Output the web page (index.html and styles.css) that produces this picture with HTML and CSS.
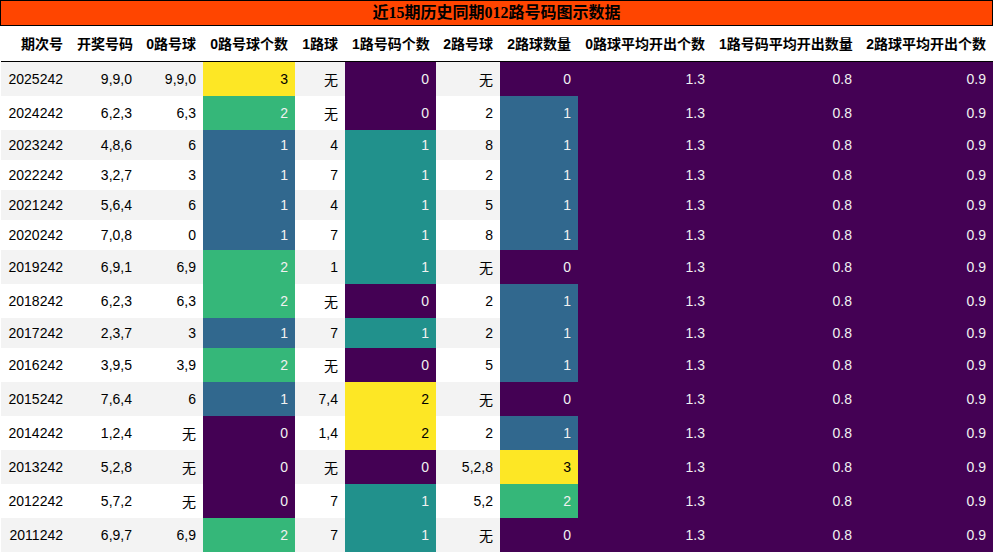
FILE: index.html
```html
<!DOCTYPE html>
<html lang="zh">
<head>
<meta charset="utf-8">
<title>近15期历史同期012路号码图示数据</title>
<link rel="stylesheet" href="styles.css">
</head>
<body>
<div class="wrap">
  <div class="title">近15期历史同期012路号码图示数据</div>
  <table class="data">
    <colgroup>
      <col class="w69"><col class="w69"><col class="w64"><col class="w92"><col class="w50"><col class="w91"><col class="w64"><col class="w78"><col class="w134"><col class="w147"><col class="w134">
    </colgroup>
    <thead>
      <tr><th>期次号</th><th>开奖号码</th><th>0路号球</th><th>0路号球个数</th><th>1路球</th><th>1路号码个数</th><th>2路号球</th><th>2路球数量</th><th>0路球平均开出个数</th><th>1路号码平均开出数量</th><th>2路球平均开出个数</th></tr>
    </thead>
    <tbody>
      <tr><td>2025242</td><td>9,9,0</td><td>9,9,0</td><td class="c3">3</td><td>无</td><td class="c0">0</td><td>无</td><td class="c0">0</td><td class="c0">1.3</td><td class="c0">0.8</td><td class="c0">0.9</td></tr>
      <tr><td>2024242</td><td>6,2,3</td><td>6,3</td><td class="c2">2</td><td>无</td><td class="c0">0</td><td>2</td><td class="c1">1</td><td class="c0">1.3</td><td class="c0">0.8</td><td class="c0">0.9</td></tr>
      <tr><td>2023242</td><td>4,8,6</td><td>6</td><td class="c1">1</td><td>4</td><td class="t1">1</td><td>8</td><td class="c1">1</td><td class="c0">1.3</td><td class="c0">0.8</td><td class="c0">0.9</td></tr>
      <tr><td>2022242</td><td>3,2,7</td><td>3</td><td class="c1">1</td><td>7</td><td class="t1">1</td><td>2</td><td class="c1">1</td><td class="c0">1.3</td><td class="c0">0.8</td><td class="c0">0.9</td></tr>
      <tr><td>2021242</td><td>5,6,4</td><td>6</td><td class="c1">1</td><td>4</td><td class="t1">1</td><td>5</td><td class="c1">1</td><td class="c0">1.3</td><td class="c0">0.8</td><td class="c0">0.9</td></tr>
      <tr><td>2020242</td><td>7,0,8</td><td>0</td><td class="c1">1</td><td>7</td><td class="t1">1</td><td>8</td><td class="c1">1</td><td class="c0">1.3</td><td class="c0">0.8</td><td class="c0">0.9</td></tr>
      <tr><td>2019242</td><td>6,9,1</td><td>6,9</td><td class="c2">2</td><td>1</td><td class="t1">1</td><td>无</td><td class="c0">0</td><td class="c0">1.3</td><td class="c0">0.8</td><td class="c0">0.9</td></tr>
      <tr><td>2018242</td><td>6,2,3</td><td>6,3</td><td class="c2">2</td><td>无</td><td class="c0">0</td><td>2</td><td class="c1">1</td><td class="c0">1.3</td><td class="c0">0.8</td><td class="c0">0.9</td></tr>
      <tr><td>2017242</td><td>2,3,7</td><td>3</td><td class="c1">1</td><td>7</td><td class="t1">1</td><td>2</td><td class="c1">1</td><td class="c0">1.3</td><td class="c0">0.8</td><td class="c0">0.9</td></tr>
      <tr><td>2016242</td><td>3,9,5</td><td>3,9</td><td class="c2">2</td><td>无</td><td class="c0">0</td><td>5</td><td class="c1">1</td><td class="c0">1.3</td><td class="c0">0.8</td><td class="c0">0.9</td></tr>
      <tr><td>2015242</td><td>7,6,4</td><td>6</td><td class="c1">1</td><td>7,4</td><td class="c3">2</td><td>无</td><td class="c0">0</td><td class="c0">1.3</td><td class="c0">0.8</td><td class="c0">0.9</td></tr>
      <tr><td>2014242</td><td>1,2,4</td><td>无</td><td class="c0">0</td><td>1,4</td><td class="c3">2</td><td>2</td><td class="c1">1</td><td class="c0">1.3</td><td class="c0">0.8</td><td class="c0">0.9</td></tr>
      <tr><td>2013242</td><td>5,2,8</td><td>无</td><td class="c0">0</td><td>无</td><td class="c0">0</td><td>5,2,8</td><td class="c3">3</td><td class="c0">1.3</td><td class="c0">0.8</td><td class="c0">0.9</td></tr>
      <tr><td>2012242</td><td>5,7,2</td><td>无</td><td class="c0">0</td><td>7</td><td class="t1">1</td><td>5,2</td><td class="c2">2</td><td class="c0">1.3</td><td class="c0">0.8</td><td class="c0">0.9</td></tr>
      <tr><td>2011242</td><td>6,9,7</td><td>6,9</td><td class="c2">2</td><td>7</td><td class="t1">1</td><td>无</td><td class="c0">0</td><td class="c0">1.3</td><td class="c0">0.8</td><td class="c0">0.9</td></tr>
    </tbody>
  </table>
</div>
</body>
</html>
```
FILE: styles.css
```css
html, body {
  margin: 0;
  padding: 0;
  background: #ffffff;
}
.wrap {
  width: 994px;
}
.title {
  box-sizing: border-box;
  width: 993px;
  height: 26px;
  border: 1px solid #000;
  background: #ff4500;
  color: #000;
  text-align: center;
  font-family: "Liberation Serif", "Noto Sans CJK SC", serif;
  font-weight: bold;
  font-size: 16px;
  line-height: 24px;
}
.data {
  margin-left: 1px;
  width: 992px;
  table-layout: fixed;
  border-collapse: collapse;
  border-spacing: 0;
  font-family: "Liberation Sans", "Noto Sans CJK SC", sans-serif;
  font-size: 14px;
  color: #000;
}
.w69 { width: 69px; }
.w64 { width: 64px; }
.w92 { width: 92px; }
.w50 { width: 50px; }
.w91 { width: 91px; }
.w78 { width: 78px; }
.w134 { width: 134px; }
.w147 { width: 147px; }
.data th,
.data td {
  box-sizing: border-box;
  text-align: right;
  white-space: nowrap;
  padding: 7px 7px;
  vertical-align: middle;
}
.data th {
  font-weight: bold;
  padding: 7px 7px 8px;
  border-bottom: 1px solid #000;
  background: #fff;
}
.data tbody tr:nth-child(odd) td { background: #f3f3f3; }
.data tbody tr:nth-child(even) td { background: #ffffff; }
.data tbody tr td.c0 { background: #440154; color: #f1f1f1; }
.data tbody tr td.c1 { background: #31688e; color: #f1f1f1; }
.data tbody tr td.t1 { background: #21918c; color: #f1f1f1; }
.data tbody tr td.c2 { background: #35b779; color: #f1f1f1; }
.data tbody tr td.c3 { background: #fde725; color: #000; }
```
